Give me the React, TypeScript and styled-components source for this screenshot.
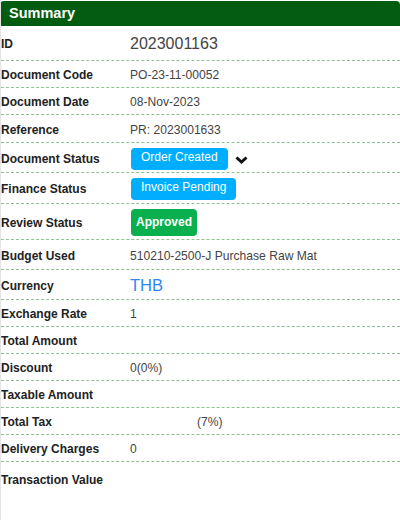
import React from "react";
import styled, { createGlobalStyle } from "styled-components";

const GlobalStyle = createGlobalStyle`
  html, body {
    margin: 0;
    padding: 0;
    background: #fff;
  }
  body {
    font-family: "Liberation Sans", Arial, sans-serif;
  }
`;

const Panel = styled.div`
  width: 400px;
  height: 520px;
  box-sizing: border-box;
  padding-top: 1px;
  border-left: 1px solid #e4e4e4;
  overflow: hidden;
  background: #fff;
`;

const Header = styled.div`
  height: 25px;
  margin-left: -1px;
  padding-left: 9px;
  background: #035c10;
  border-radius: 4px 4px 0 0;
  color: #fff;
  font-size: 14.5px;
  font-weight: bold;
  line-height: 24px;
`;

const Row = styled.div<{ $height: number; $last?: boolean }>`
  display: grid;
  grid-template-columns: 129px 1fr;
  align-items: center;
  box-sizing: border-box;
  height: ${(p) => p.$height}px;
  padding-top: 2px;
  border-bottom: ${(p) => (p.$last ? "none" : "1px dashed #8fc08f")};
`;

const Label = styled.div`
  color: #222;
  font-size: 12px;
  font-weight: bold;
  white-space: nowrap;
`;

const Value = styled.div<{ $size?: number; $color?: string }>`
  display: flex;
  align-items: center;
  color: ${(p) => p.$color || "#444"};
  font-size: ${(p) => p.$size || 12.1}px;
  white-space: nowrap;
`;

const Badge = styled.span<{ $color: string; $bold?: boolean; $height: number }>`
  display: inline-block;
  box-sizing: border-box;
  height: ${(p) => p.$height}px;
  margin-left: 1px;
  padding: ${(p) => (p.$bold ? "6px 5px" : "2px 10px")};
  background: ${(p) => p.$color};
  border-radius: 4px;
  color: #fff;
  font-size: 12px;
  font-weight: ${(p) => (p.$bold ? "bold" : "normal")};
  line-height: 14px;
`;

const Caret = styled.svg`
  width: 13px;
  height: 10px;
  margin-left: 7px;
  margin-top: 3px;
`;

const TaxGap = styled.span`
  display: inline-block;
  width: 67px;
`;

const TopLabel = styled(Label)`
  align-self: start;
  margin-top: 9px;
`;

export default function App() {
  return (
    <>
      <GlobalStyle />
      <Panel>
        <Header>Summary</Header>
        <Row $height={35}>
          <Label>ID</Label>
          <Value $size={16}>2023001163</Value>
        </Row>
        <Row $height={27}>
          <Label>Document Code</Label>
          <Value>PO-23-11-00052</Value>
        </Row>
        <Row $height={27}>
          <Label>Document Date</Label>
          <Value>08-Nov-2023</Value>
        </Row>
        <Row $height={28}>
          <Label>Reference</Label>
          <Value>PR: 2023001633</Value>
        </Row>
        <Row $height={30}>
          <Label>Document Status</Label>
          <Value>
            <Badge $color="#00aeff" $height={22}>Order Created</Badge>
            <Caret viewBox="0 0 13 10">
              <path d="M1.5 2.5 L6.5 7 L11.5 2.5" fill="none" stroke="#111" strokeWidth="3" />
            </Caret>
          </Value>
        </Row>
        <Row $height={31}>
          <Label>Finance Status</Label>
          <Value>
            <Badge $color="#00aeff" $height={22}>Invoice Pending</Badge>
          </Value>
        </Row>
        <Row $height={36}>
          <Label>Review Status</Label>
          <Value>
            <Badge $color="#0bb04e" $bold $height={27}>Approved</Badge>
          </Value>
        </Row>
        <Row $height={30}>
          <Label>Budget Used</Label>
          <Value>510210-2500-J Purchase Raw Mat</Value>
        </Row>
        <Row $height={30}>
          <Label>Currency</Label>
          <Value $size={16.5} $color="#2f86f5">THB</Value>
        </Row>
        <Row $height={27}>
          <Label>Exchange Rate</Label>
          <Value>1</Value>
        </Row>
        <Row $height={27}>
          <Label>Total Amount</Label>
          <Value />
        </Row>
        <Row $height={27}>
          <Label>Discount</Label>
          <Value>0(0%)</Value>
        </Row>
        <Row $height={27}>
          <Label>Taxable Amount</Label>
          <Value />
        </Row>
        <Row $height={27}>
          <Label>Total Tax</Label>
          <Value>
            <TaxGap />
            (7%)
          </Value>
        </Row>
        <Row $height={27}>
          <Label>Delivery Charges</Label>
          <Value>0</Value>
        </Row>
        <Row $height={57} $last>
          <TopLabel>Transaction Value</TopLabel>
          <Value />
        </Row>
      </Panel>
    </>
  );
}
